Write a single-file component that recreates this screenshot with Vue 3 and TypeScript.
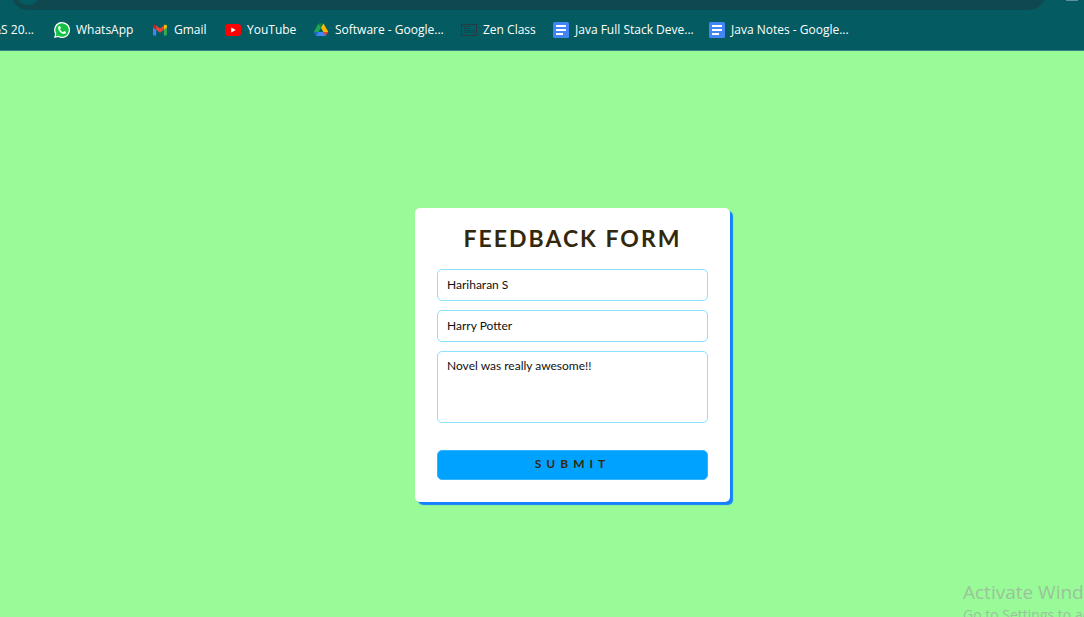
<script setup lang="ts">
import { ref } from 'vue'

interface Bookmark {
  label: string
  icon: 'whatsapp' | 'gmail' | 'youtube' | 'drive' | 'zen' | 'docs'
}

const bookmarks: Bookmark[] = [
  { label: 'WhatsApp', icon: 'whatsapp' },
  { label: 'Gmail', icon: 'gmail' },
  { label: 'YouTube', icon: 'youtube' },
  { label: 'Software - Google...', icon: 'drive' },
  { label: 'Zen Class', icon: 'zen' },
  { label: 'Java Full Stack Deve...', icon: 'docs' },
  { label: 'Java Notes - Google...', icon: 'docs' },
]

const name = ref('Hariharan S')
const book = ref('Harry Potter')
const feedback = ref('Novel was really awesome!!')
</script>

<template>
  <div class="window">
    <header class="chrome">
      <div class="toolbar">
        <div class="address"><span class="site"></span></div>
        <span class="menu"></span>
      </div>
      <nav class="bookmarks">
        <a class="bookmark clipped" href="#">&amp;S 20...</a>
        <a v-for="b in bookmarks" :key="b.label" class="bookmark" href="#">
          <svg class="icon" viewBox="0 0 16 16" aria-hidden="true">
            <template v-if="b.icon === 'whatsapp'">
              <path d="M0 16l1.100-4.100A8 8 0 1 1 4.200 15z" fill="#fff" />
              <path d="M1.600 14.400l.8-2.800A6.700 6.700 0 1 1 4.500 13.700z" fill="#12c143" />
              <path d="M5.300 4c-.8.200-1.300 1-1.200 2 .4 3 3 5.600 5.800 6 1.200.1 2.200-.7 2.200-1.900l-2-1-1 1.100C7.700 9.700 6.500 8.600 6 7.200l.9-1L6.100 4z" fill="#fff" />
            </template>
            <template v-else-if="b.icon === 'gmail'">
              <path d="M1 5.500l3.200 2.300V13.500H2a1 1 0 0 1-1-1z" fill="#4285f4" />
              <path d="M15 5.500l-3.200 2.300V13.500H14a1 1 0 0 0 1-1z" fill="#34a853" />
              <path d="M1 4.200C1 2.800 2.500 2.200 3.600 3l.6.500v4.300L1 5.500z" fill="#c5221f" />
              <path d="M15 4.200c0-1.400-1.500-2-2.600-1.200l-.6.500v4.300L15 5.500z" fill="#fbbc04" />
              <path d="M4.200 3.500L8 6.400l3.800-2.900v4.300L8 10.700 4.200 7.800z" fill="#ea4335" />
            </template>
            <template v-else-if="b.icon === 'youtube'">
              <rect x="0" y="2" width="16" height="12" rx="3" fill="#f00" />
              <path d="M6.200 5.500v5L10.700 8z" fill="#fff" />
            </template>
            <template v-else-if="b.icon === 'drive'">
              <path d="M5.500 1.500L8 5.800 3.300 14 .8 10z" fill="#20a653" />
              <path d="M5.500 1.500h5L8 5.800z" fill="#14833c" />
              <path d="M10.500 1.500l4.800 8.500h-4.900L8 5.800z" fill="#ffba00" />
              <path d="M.8 10h4.800l-2.300 4z" fill="#1967d2" />
              <path d="M5.600 10h4.800l2.300 4H3.300z" fill="#4285f4" />
              <path d="M10.400 10h4.900l-2.600 4z" fill="#ea4335" />
            </template>
            <template v-else-if="b.icon === 'zen'">
              <path d="M.5 2.500h15v11H.5z" fill="none" stroke="#263b42" />
              <path d="M3 4.500h2.500M3 6.500h2.500M7 4.500v2.500M8.500 6.500V4.500M3 8.500h2M3 10.500h2M6.500 8v3M8.500 8.500v2M10 8.500h1.500M10 10.500h1.500M13 8v3" fill="none" stroke="#263b42" />
            </template>
            <template v-else>
              <rect width="16" height="16" rx="1.500" fill="#4285f4" />
              <path d="M3 4h10M3 8h10M3 12h7" fill="none" stroke="#fff" stroke-width="2" />
            </template>
          </svg>
          <span>{{ b.label }}</span>
        </a>
      </nav>
    </header>

    <main class="page">
      <form class="card" @submit.prevent>
        <h1 class="title">FEEDBACK FORM</h1>
        <input v-model="name" class="field" type="text" aria-label="Name" />
        <input v-model="book" class="field" type="text" aria-label="Book" />
        <textarea v-model="feedback" class="field message" aria-label="Feedback"></textarea>
        <button class="submit" type="submit">SUBMIT</button>
      </form>
    </main>

    <aside class="notice">
      <p class="notice-title">Activate Windows</p>
      <p class="notice-text">Go to Settings to activate Windows.</p>
    </aside>
  </div>
</template>

<style>
body {
  background: #98fb98;
}
</style>

<style scoped>
.window {
  position: relative;
  display: flex;
  flex-direction: column;
  height: 100vh;
  overflow: hidden;
  background: #98fb98;
}

.chrome {
  flex: none;
  background: #045c62;
  border-bottom: 1px solid #3a8288;
}

.toolbar {
  display: flex;
  justify-content: space-between;
  height: 10px;
  padding: 0 6px 0 11px;
  overflow: hidden;
}

.address {
  display: flex;
  align-items: flex-end;
  box-sizing: border-box;
  width: calc(100% - 32px);
  height: 34px;
  margin-top: -24px;
  padding: 0 6px 5px;
  border-radius: 17px;
  background: #10484f;
}

.site {
  width: 22px;
  height: 22px;
  border-radius: 50%;
  background: #045c62;
}

.menu {
  width: 12px;
  height: 1px;
  background: #5b959a;
}

.bookmarks {
  display: grid;
  grid-template-columns: 34px 98px 73px 88px 148px 92px 156px auto;
  height: 40px;
  align-items: center;
  justify-content: start;
}

.bookmark {
  display: flex;
  align-items: center;
  gap: 6px;
  padding-left: 20px;
  color: #fff;
  font: 12px/16px "Open Sans", "Noto Sans", sans-serif;
  text-decoration: none;
  white-space: nowrap;
}

.clipped {
  justify-content: flex-end;
  padding-left: 0;
  overflow: hidden;
}

.icon {
  flex: none;
  width: 16px;
  height: 16px;
}

.page {
  flex: 1;
  display: flex;
  justify-content: center;
  align-items: flex-start;
  padding: 157px 0 0 61px;
}

.card {
  display: flex;
  flex-direction: column;
  box-sizing: border-box;
  width: 315px;
  padding: 15px 22px 22px;
  border-radius: 5px;
  background: #fff;
  box-shadow: 3px 3px 1px #1480ff;
  font-family: Lato, "Open Sans", sans-serif;
}

.title {
  margin: 0 0 16px;
  color: #33270c;
  font-size: 23px;
  line-height: 30px;
  font-weight: 700;
  letter-spacing: 2px;
  text-align: center;
}

.field {
  box-sizing: border-box;
  width: 100%;
  height: 32px;
  margin: 0 0 9px;
  padding: 5px 9px 7px;
  border: 1px solid #87e3ff;
  border-radius: 5px;
  outline: none;
  background: #fff;
  color: #111;
  font: 12px/18px Lato, "Open Sans", sans-serif;
}

.message {
  height: 72px;
  margin-bottom: 27px;
  resize: none;
}

.submit {
  height: 30px;
  padding: 0 0 2px;
  border: 1px solid #35b4ff;
  border-radius: 5px;
  background: #00a2ff;
  color: #33270c;
  font: 700 12px/18px Lato, "Open Sans", sans-serif;
  letter-spacing: 5px;
}

.notice {
  position: absolute;
  top: 580px;
  left: calc(100% - 121px);
  color: #9bc39b;
  font-family: "Open Sans", "Noto Sans", sans-serif;
  white-space: nowrap;
  pointer-events: none;
}

.notice p {
  margin: 0;
}

.notice-title {
  font-size: 19px;
  line-height: 24px;
}

.notice-text {
  font-size: 14px;
  line-height: 22px;
}
</style>
